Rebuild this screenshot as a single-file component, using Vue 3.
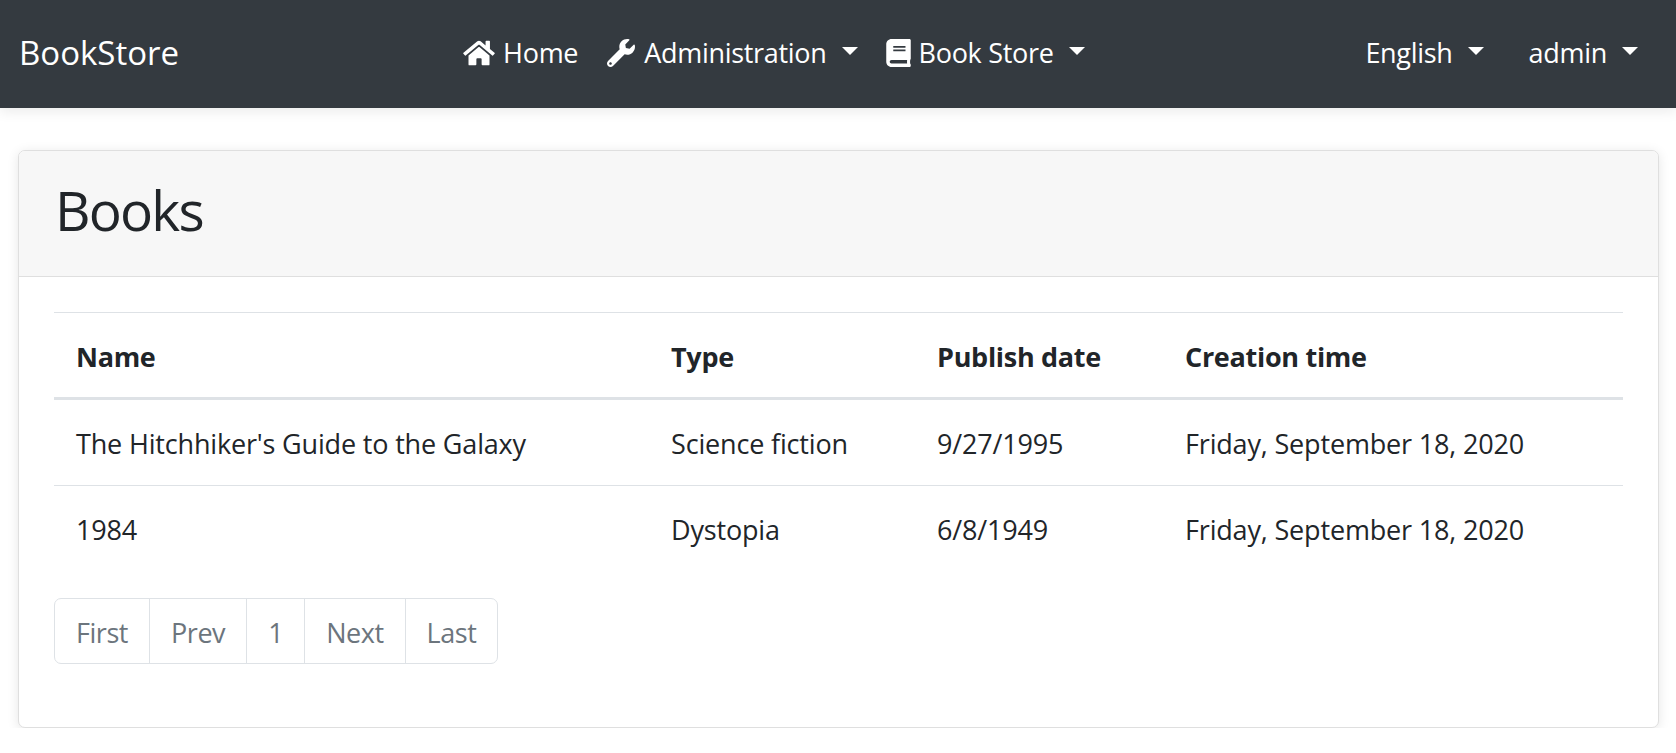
<template>
  <nav class="navbar">
    <a class="brand">BookStore</a>
    <ul class="nav nav-main">
      <li class="nav-item">
        <svg class="icon icon-home" viewBox="0 0 576 512"><path d="M280.37 148.26L96 300.11V464a16 16 0 0 0 16 16l112.06-.29a16 16 0 0 0 15.92-16V368a16 16 0 0 1 16-16h64a16 16 0 0 1 16 16v95.64a16 16 0 0 0 16 16.05L464 480a16 16 0 0 0 16-16V300L295.67 148.26a12.19 12.19 0 0 0-15.3 0zM571.6 251.47L488 182.56V44.05a12 12 0 0 0-12-12h-56a12 12 0 0 0-12 12v72.61L318.47 43a48 48 0 0 0-61 0L4.34 251.47a12 12 0 0 0-1.6 16.9l25.5 31A12 12 0 0 0 45.15 301l235.22-193.74a12.19 12.19 0 0 1 15.3 0L530.9 301a12 12 0 0 0 16.9-1.6l25.5-31a12 12 0 0 0-1.7-16.93z"/></svg>
        <span>Home</span>
      </li>
      <li class="nav-item">
        <svg class="icon icon-wrench" viewBox="0 0 512 512"><path d="M507.73 109.1c-2.24-9.03-13.54-12.09-20.12-5.51l-74.36 74.36-67.88-11.31-11.31-67.88 74.36-74.36c6.62-6.62 3.43-17.9-5.66-20.16-47.38-11.74-99.55.91-136.58 37.93-39.64 39.64-50.55 97.1-34.05 147.2L18.74 402.76c-24.99 24.99-24.99 65.51 0 90.5 24.99 24.99 65.51 24.99 90.5 0l213.21-213.21c50.12 16.71 107.47 5.68 147.37-34.22 37.07-37.07 49.7-89.32 37.91-136.73zM64 472c-13.25 0-24-10.75-24-24 0-13.26 10.75-24 24-24s24 10.74 24 24c0 13.25-10.75 24-24 24z"/></svg>
        <span>Administration</span>
        <i class="caret"></i>
      </li>
      <li class="nav-item">
        <svg class="icon icon-book" viewBox="0 0 448 512"><path d="M448 360V24c0-13.3-10.7-24-24-24H96C43 0 0 43 0 96v320c0 53 43 96 96 96h328c13.3 0 24-10.7 24-24v-16c0-7.5-3.5-14.3-8.9-18.7-4.2-15.4-4.2-59.3 0-74.7 5.4-4.3 8.9-11.1 8.9-18.6zM128 134c0-3.3 2.7-6 6-6h212c3.3 0 6 2.7 6 6v20c0 3.3-2.7 6-6 6H134c-3.3 0-6-2.7-6-6v-20zm0 64c0-3.3 2.7-6 6-6h212c3.3 0 6 2.7 6 6v20c0 3.3-2.7 6-6 6H134c-3.3 0-6-2.7-6-6v-20zm253.4 250H96c-17.7 0-32-14.3-32-32 0-17.6 14.4-32 32-32h285.4c-1.9 17.1-1.9 46.9 0 64z"/></svg>
        <span>Book Store</span>
        <i class="caret"></i>
      </li>
    </ul>
    <ul class="nav nav-right">
      <li class="nav-item"><span>English</span><i class="caret"></i></li>
      <li class="nav-item"><span>admin</span><i class="caret"></i></li>
    </ul>
  </nav>

  <main class="container">
    <section class="card">
      <header class="card-header">
        <h2>Books</h2>
      </header>
      <div class="card-body">
        <table class="table">
          <thead>
            <tr>
              <th class="col-name">Name</th>
              <th class="col-type">Type</th>
              <th class="col-date">Publish date</th>
              <th>Creation time</th>
            </tr>
          </thead>
          <tbody>
            <tr v-for="book in books" :key="book.name">
              <td>{{ book.name }}</td>
              <td>{{ book.type }}</td>
              <td>{{ book.date }}</td>
              <td>{{ book.created }}</td>
            </tr>
          </tbody>
        </table>
        <ul class="pagination">
          <li v-for="p in pages" :key="p">{{ p }}</li>
        </ul>
      </div>
    </section>
  </main>
</template>

<script setup>
const books = [
  { name: "The Hitchhiker's Guide to the Galaxy", type: 'Science fiction', date: '9/27/1995', created: 'Friday, September 18, 2020' },
  { name: '1984', type: 'Dystopia', date: '6/8/1949', created: 'Friday, September 18, 2020' }
]
const pages = ['First', 'Prev', '1', 'Next', 'Last']
</script>

<style>
html, body {
  margin: 0;
  background: #fff;
}
</style>

<style scoped>
.navbar {
  height: 108px;
  box-sizing: border-box;
  padding: 0 38px 3px 19px;
  display: flex;
  align-items: center;
  background: #343a40;
  color: #fff;
  font-family: "Open Sans", "Noto Sans", sans-serif;
  box-shadow: 0 4px 12px rgba(0, 0, 0, 0.08);
  position: relative;
}

.brand {
  font-size: 33px;
}

.nav {
  list-style: none;
  display: flex;
  align-items: center;
  margin: 0;
  padding: 0;
  font-size: 27px;
  letter-spacing: -0.3px;
}

.nav-main {
  margin-left: 284px;
  gap: 28px;
}

.nav-right {
  margin-left: auto;
  gap: 45px;
}

.nav-item {
  display: flex;
  align-items: center;
}

.icon {
  fill: #fff;
  height: 28px;
  margin-right: 8px;
}

.icon-home {
  width: 32px;
}

.icon-wrench {
  width: 30px;
}

.icon-book {
  width: 25px;
}

.caret {
  width: 0;
  height: 0;
  margin-left: 15px;
  margin-top: -3px;
  border-top: 8px solid #fff;
  border-left: 8px solid transparent;
  border-right: 8px solid transparent;
}

.container {
  padding: 42px 17px 0 18px;
  font-family: "Open Sans", "Noto Sans", sans-serif;
  color: #212529;
}

.card {
  height: 578px;
  box-sizing: border-box;
  border: 1px solid #dfdfdf;
  border-radius: 7px;
  background: #fff;
  box-shadow: 0 2px 12px rgba(0, 0, 0, 0.1);
}

.card-header {
  height: 126px;
  box-sizing: border-box;
  padding: 0 36px 8px;
  display: flex;
  align-items: center;
  background: #f7f7f7;
  border-bottom: 1px solid #dfdfdf;
  border-radius: 6px 6px 0 0;
}

h2 {
  margin: 0;
  font-size: 55px;
  font-weight: 400;
  letter-spacing: -1.8px;
}

.card-body {
  padding: 35px 35px 0;
}

.table {
  width: 1569px;
  border-collapse: collapse;
  table-layout: fixed;
  font-size: 27px;
  letter-spacing: -0.17px;
}

.col-name {
  width: 573px;
}

.col-type {
  width: 244px;
}

.col-date {
  width: 226px;
}

th, td {
  padding: 2px 0 0 22px;
  text-align: left;
  white-space: nowrap;
  border-top: 1px solid #dee2e6;
}

th {
  height: 82px;
  font-weight: 700;
  letter-spacing: -0.3px;
  border-bottom: 3px solid #dee2e6;
}

td {
  height: 83px;
}

.pagination {
  list-style: none;
  display: inline-flex;
  margin: 27px 0 0;
  padding: 0;
  height: 66px;
  box-sizing: border-box;
  border: 1px solid #dee2e6;
  border-radius: 7px;
  font-size: 27px;
  letter-spacing: -0.45px;
  color: #6c757d;
}

.pagination li {
  display: flex;
  align-items: center;
  padding: 2px 21px 0;
}

.pagination li + li {
  border-left: 1px solid #dee2e6;
}
</style>
